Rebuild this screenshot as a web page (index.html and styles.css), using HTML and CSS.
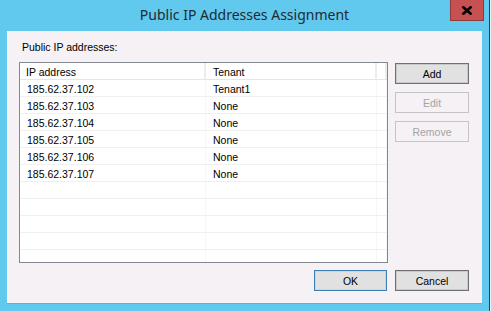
FILE: index.html
```html
<!DOCTYPE html>
<html lang="en">
<head>
  <meta charset="UTF-8" />
  <title>Public IP Addresses Assignment</title>
  <link rel="stylesheet" href="styles.css">
</head>
<body>
  <div class="window">
    <div class="titlebar">
      <span></span>
      <div class="title">Public IP Addresses Assignment</div>
      <button class="close" type="button">
        <svg width="12" height="9" viewBox="0 0 12 9"><path d="M1.5 0.5 L10.5 8.5 M10.5 0.5 L1.5 8.5" stroke="#000" stroke-width="2.6"/></svg>
      </button>
    </div>

    <div class="client">
      <div class="caption">Public IP addresses:</div>

      <div class="main">
        <div class="listview">
          <div class="row header">
            <div class="cell">IP address</div>
            <div class="cell">Tenant</div>
            <div class="cell"></div>
          </div>
          <div class="row"><div class="cell">185.62.37.102</div><div class="cell">Tenant1</div><div class="cell"></div></div>
          <div class="row"><div class="cell">185.62.37.103</div><div class="cell">None</div><div class="cell"></div></div>
          <div class="row"><div class="cell">185.62.37.104</div><div class="cell">None</div><div class="cell"></div></div>
          <div class="row"><div class="cell">185.62.37.105</div><div class="cell">None</div><div class="cell"></div></div>
          <div class="row"><div class="cell">185.62.37.106</div><div class="cell">None</div><div class="cell"></div></div>
          <div class="row"><div class="cell">185.62.37.107</div><div class="cell">None</div><div class="cell"></div></div>
          <div class="row"><div class="cell"></div><div class="cell"></div><div class="cell"></div></div>
          <div class="row"><div class="cell"></div><div class="cell"></div><div class="cell"></div></div>
          <div class="row"><div class="cell"></div><div class="cell"></div><div class="cell"></div></div>
          <div class="row"><div class="cell"></div><div class="cell"></div><div class="cell"></div></div>
          <div class="row last"><div class="cell"></div><div class="cell"></div><div class="cell"></div></div>
        </div>

        <div class="side-buttons">
          <button class="btn default" type="button">Add</button>
          <button class="btn" type="button" disabled>Edit</button>
          <button class="btn" type="button" disabled>Remove</button>
        </div>
      </div>

      <div class="footer">
        <button class="btn focused" type="button">OK</button>
        <button class="btn default" type="button">Cancel</button>
      </div>
    </div>
  </div>
</body>
</html>
```

FILE: styles.css
```css
* {
  box-sizing: border-box;
  margin: 0;
  padding: 0;
}

body {
  background: #62c9ee;
  width: 491px;
  height: 311px;
  overflow: hidden;
  font-family: 'Liberation Sans', Arial, sans-serif;
}

.window {
  width: 491px;
  height: 311px;
  background: #62c9ee;
  padding-left: 7px;
  border-right: 1px solid #e6f3f8;
  box-shadow: inset -1px 0 0 #2b4550;
  display: flex;
  flex-direction: column;
}

.titlebar {
  height: 31px;
  width: 477px;
  display: grid;
  grid-template-columns: 1fr auto 1fr;
  align-items: start;
}

.title {
  font-family: 'Noto Sans', sans-serif;
  font-size: 14px;
  color: #1f2a30;
  line-height: 30px;
  margin-left: -2px;
}

.close {
  justify-self: end;
  width: 34px;
  height: 21px;
  background: #c75050;
  border: 1px solid #8c3a3a;
  border-top: none;
  display: flex;
  align-items: center;
  justify-content: center;
}

.client {
  width: 475px;
  height: 272px;
  background: #f5f1f5;
  box-shadow: inset 1px 0 0 #fbf9fb, 0 1px 0 #56b3d6;
  padding: 10px 13px 12px 12px;
  display: flex;
  flex-direction: column;
  font-size: 10.5px;
  color: #000;
}

.caption {
  height: 13px;
  line-height: 13px;
  padding-left: 3px;
  margin-bottom: 8px;
}

.main {
  display: flex;
  gap: 7px;
}

.listview {
  width: 370px;
  height: 201px;
  background: #fff;
  border: 1px solid #828790;
  overflow: hidden;
}

.row {
  display: grid;
  grid-template-columns: 186px 171px 1fr;
  height: 17px;
  border-bottom: 1px solid #f0f0f0;
}

.row.last {
  border-bottom: none;
}

.cell {
  padding: 2px 0 0 7px;
  line-height: 14px;
  border-right: 1px solid #f6f6f6;
  white-space: nowrap;
}

.row.header {
  border-bottom: 1px solid #e5e5e5;
}

.row.header .cell {
  border-right: 2px solid #ececec;
}

.row.header .cell:first-child {
  padding-left: 6px;
}

.side-buttons {
  display: flex;
  flex-direction: column;
  gap: 8px;
  padding-top: 1px;
}

.btn {
  width: 74px;
  height: 21px;
  font-family: 'Liberation Sans', Arial, sans-serif;
  font-size: 10.5px;
  color: #000;
  background: #e1e1e1;
  border: 1px solid #adadad;
}

.btn.default {
  border: 1px solid #707070;
  box-shadow: inset 0 0 0 1px #c9c9c9;
}

.btn.focused {
  border: 1px solid #3c7fb1;
  box-shadow: inset 0 0 0 1px #c9d7e3;
}

.btn:disabled {
  background: #f5f1f5;
  border: 1px solid #c6c4c6;
  color: #a3a3a3;
}

.footer {
  margin-top: auto;
  display: flex;
  justify-content: flex-end;
  gap: 8px;
}

.footer .btn {
  width: 73px;
}

.footer .btn.default {
  width: 74px;
}
```
